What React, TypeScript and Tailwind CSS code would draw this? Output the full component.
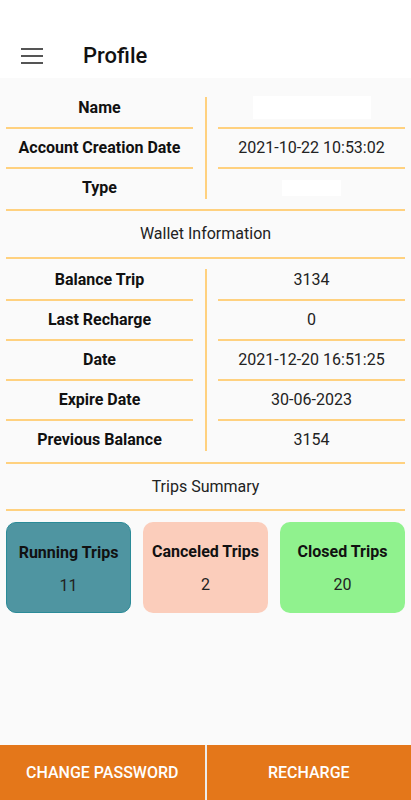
import React from 'react';

const line = 'h-[2px] bg-[#ffd17f]';

function InfoTable({ rows }: { rows: [string, React.ReactNode][] }) {
  return (
    <div className="flex">
      <div className="w-[187px] flex flex-col">
        {rows.map(([label], i) => (
          <div
            key={label}
            className={`flex items-center justify-center text-[16px] font-bold text-[#111] ${
              i < rows.length - 1 ? 'h-[40px] border-b-2 border-[#ffd17f]' : 'h-[38px]'
            }`}
          >
            {label}
          </div>
        ))}
      </div>
      <div className="flex-1 flex justify-center py-2">
        <div className="w-[2px] bg-[#ffd17f]" />
      </div>
      <div className="w-[187px] flex flex-col">
        {rows.map(([label, value], i) => (
          <div
            key={label}
            className={`flex items-center justify-center text-[16px] text-[#222] ${
              i < rows.length - 1 ? 'h-[40px] border-b-2 border-[#ffd17f]' : 'h-[38px]'
            }`}
          >
            {value}
          </div>
        ))}
      </div>
    </div>
  );
}

function TripCard({ title, count, cls }: { title: string; count: number; cls: string }) {
  return (
    <div className={`h-[91px] rounded-[10px] flex flex-col items-center pt-[18px] ${cls}`}>
      <span className="text-[16px] font-bold text-[#111] leading-[24px]">{title}</span>
      <span className="text-[16px] text-[#222] leading-[24px] mt-[9px]">{count}</span>
    </div>
  );
}

export default function App() {
  return (
    <div className="h-screen flex flex-col bg-[#fafafa] font-['Roboto',sans-serif]">
      <header className="h-[78px] bg-white pt-[41px] shrink-0">
        <div className="h-[30px] flex items-center">
          <div className="w-[22px] ml-[21px] flex flex-col gap-[5px]">
            <div className="h-[2px] bg-[#555]" />
            <div className="h-[2px] bg-[#555]" />
            <div className="h-[2px] bg-[#555]" />
          </div>
          <h1 className="ml-[40px] text-[22px] font-medium text-[#111] leading-[30px]">Profile</h1>
        </div>
      </header>

      <main className="flex-1 px-[6px] pt-[11px]">
        <InfoTable
          rows={[
            ['Name', <div className="w-[118px] h-[23px] bg-white -mt-[2px]" />],
            ['Account Creation Date', '2021-10-22 10:53:02'],
            ['Type', <div className="w-[59px] h-[16px] bg-white" />],
          ]}
        />
        <div className={`${line} mt-[2px]`} />
        <div className="h-[46px] flex items-center justify-center text-[16px] text-[#222]">
          Wallet Information
        </div>
        <div className={line} />
        <div className="mt-[2px]">
          <InfoTable
            rows={[
              ['Balance Trip', '3134'],
              ['Last Recharge', '0'],
              ['Date', '2021-12-20 16:51:25'],
              ['Expire Date', '30-06-2023'],
              ['Previous Balance', '3154'],
            ]}
          />
        </div>
        <div className={`${line} mt-[3px]`} />
        <div className="h-[45px] flex items-center justify-center text-[16px] text-[#222]">
          Trips Summary
        </div>
        <div className={line} />

        <div className="grid grid-cols-3 gap-[12px] mt-[11px]">
          <TripCard title="Running Trips" count={11} cls="bg-[#4f95a1] border border-[#2b8b98]" />
          <TripCard title="Canceled Trips" count={2} cls="bg-[#fbcdbb]" />
          <TripCard title="Closed Trips" count={20} cls="bg-[#90f28e]" />
        </div>
      </main>

      <footer className="h-[55px] flex gap-[2px] bg-[#ececec] shrink-0">
        <button className="flex-1 bg-[#e4771a] text-white text-[16px] font-medium uppercase">
          Change Password
        </button>
        <button className="flex-1 bg-[#e4771a] text-white text-[16px] font-medium uppercase">
          Recharge
        </button>
      </footer>
    </div>
  );
}
